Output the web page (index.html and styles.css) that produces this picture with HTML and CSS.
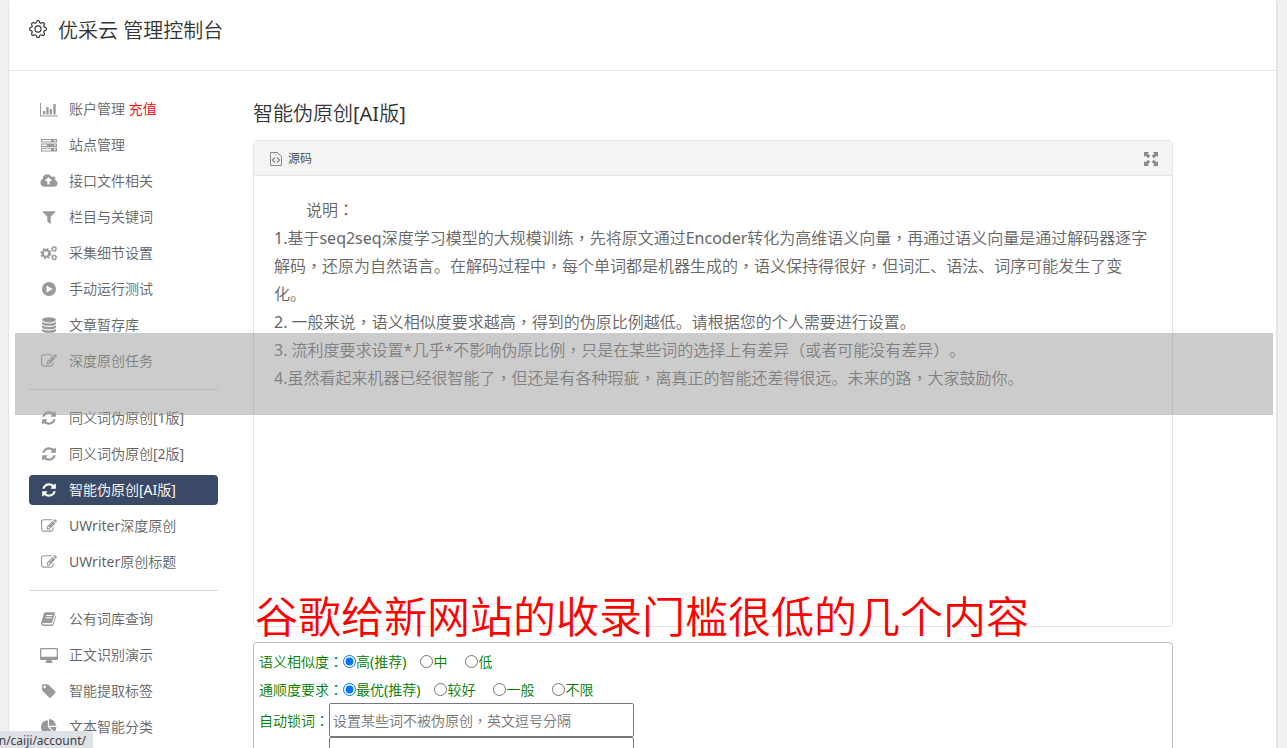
FILE: index.html
```html
<!DOCTYPE html>
<html lang="zh">
<head>
    <meta charset="UTF-8">
    <meta name="viewport" content="width=device-width, initial-scale=1.0">
    <title>优采云 管理控制台</title>
    <link rel="stylesheet" href="styles.css">
</head>
<body>

<!-- 图标 -->
<svg class="sprite" aria-hidden="true">
    <symbol id="i-gear" viewBox="0 0 16 16">
        <path d="M8 4.754a3.246 3.246 0 1 0 0 6.492 3.246 3.246 0 0 0 0-6.492zM5.754 8a2.246 2.246 0 1 1 4.492 0 2.246 2.246 0 0 1-4.492 0z"/>
        <path d="M9.796 1.343c-.527-1.79-3.065-1.79-3.592 0l-.094.319a.873.873 0 0 1-1.255.52l-.292-.16c-1.64-.892-3.433.902-2.54 2.541l.159.292a.873.873 0 0 1-.52 1.255l-.319.094c-1.79.527-1.79 3.065 0 3.592l.319.094a.873.873 0 0 1 .52 1.255l-.16.292c-.892 1.64.901 3.434 2.541 2.54l.292-.159a.873.873 0 0 1 1.255.52l.094.319c.527 1.79 3.065 1.79 3.592 0l.094-.319a.873.873 0 0 1 1.255-.52l.292.16c1.64.893 3.434-.902 2.54-2.541l-.159-.292a.873.873 0 0 1 .52-1.255l.319-.094c1.79-.527 1.79-3.065 0-3.592l-.319-.094a.873.873 0 0 1-.52-1.255l.16-.292c.893-1.64-.902-3.433-2.541-2.54l-.292.159a.873.873 0 0 1-1.255-.52l-.094-.319zm-2.633.283c.246-.835 1.428-.835 1.674 0l.094.319a1.873 1.873 0 0 0 2.693 1.115l.291-.16c.764-.415 1.6.42 1.184 1.185l-.159.292a1.873 1.873 0 0 0 1.116 2.692l.318.094c.835.246.835 1.428 0 1.674l-.319.094a1.873 1.873 0 0 0-1.115 2.693l.16.291c.415.764-.42 1.6-1.185 1.184l-.291-.159a1.873 1.873 0 0 0-2.693 1.116l-.094.318c-.246.835-1.428.835-1.674 0l-.094-.319a1.873 1.873 0 0 0-2.692-1.115l-.292.16c-.764.415-1.6-.42-1.184-1.185l.159-.291A1.873 1.873 0 0 0 1.945 8.93l-.319-.094c-.835-.246-.835-1.428 0-1.674l.319-.094A1.873 1.873 0 0 0 3.06 4.377l-.16-.292c-.415-.764.42-1.6 1.185-1.184l.292.159a1.873 1.873 0 0 0 2.692-1.115l.094-.319z"/>
    </symbol>
    <symbol id="i-chart" viewBox="0 0 20 16">
        <path d="M1 2h1v12.5h17v1H1zM4 10h2.3v3.5H4zM7.3 6h2.3v7.5H7.3zM10.7 8H13v5.5h-2.3zM14.3 3h2.4v10.5h-2.4z"/>
    </symbol>
    <symbol id="i-server" viewBox="0 0 20 16">
        <path fill-rule="evenodd" d="M2 2h16v3.6H2zM3 3v1.6h9V3zM15 3v1.4h1.6V3zM2 6.4h16V10H2zM3 7.4V9h5V7.4zM15 7.4v1.4h1.6V7.4zM2 10.8h16v3.6H2zM3 11.8v1.6h9v-1.6zM15 11.8v1.4h1.6v-1.4z"/>
    </symbol>
    <symbol id="i-cloud" viewBox="0 0 1920 1792">
        <path fill-rule="evenodd" d="M1280 864q0-14-9-23l-352-352q-9-9-23-9t-23 9l-351 351q-10 12-10 24 0 14 9 23t23 9h224v352q0 13 9.500 22.500t22.500 9.500h192q13 0 22.500-9.500t9.500-22.500v-352h224q13 0 22.500-9.500t9.500-22.500zm640 288q0 159-112.500 271.500t-271.500 112.500h-1088q-185 0-316.500-131.500t-131.500-316.500q0-130 70-240t188-165q-2-30-2-43 0-212 150-362t362-150q156 0 285.500 87t188.500 231q71-62 166-62 106 0 181 75t75 181q0 76-41 138 130 31 213.500 135.500t83.500 238.500z"/>
    </symbol>
    <symbol id="i-filter" viewBox="0 0 1792 1792">
        <path d="M1595 295q17 41-14 70l-493 493v742q0 42-39 59-13 5-25 5-27 0-45-19l-256-256q-19-19-19-45v-486l-493-493q-31-29-14-70 17-39 59-39h1280q42 0 59 39z"/>
    </symbol>
    <symbol id="i-cogs" viewBox="0 0 20 16">
        <g fill="none" stroke="currentColor">
            <circle cx="7" cy="8.500" r="3.300" stroke-width="2.200"/>
            <circle cx="7" cy="8.500" r="4.900" stroke-width="1.500" stroke-dasharray="1.920 1.928"/>
            <circle cx="15.200" cy="4" r="1.800" stroke-width="1.300"/>
            <circle cx="15.200" cy="4" r="2.700" stroke-width="1" stroke-dasharray="1.060 1.060"/>
            <circle cx="15.200" cy="12.500" r="1.800" stroke-width="1.300"/>
            <circle cx="15.200" cy="12.500" r="2.700" stroke-width="1" stroke-dasharray="1.060 1.060"/>
        </g>
    </symbol>
    <symbol id="i-play" viewBox="0 0 20 16">
        <path fill-rule="evenodd" d="M10 1a7 7 0 1 1 0 14a7 7 0 1 1 0-14zM7.500 4.400v7.200L13.800 8z"/>
    </symbol>
    <symbol id="i-database" viewBox="0 0 20 16">
        <ellipse cx="10" cy="2.800" rx="7" ry="2.600"/>
        <path d="M3 4.700q2 1.700 7 1.700t7-1.700v1.700q0 2.400-7 2.400t-7-2.400zM3 8.200q2 1.700 7 1.700t7-1.700v1.700q0 2.400-7 2.400t-7-2.400zM3 11.700q2 1.700 7 1.700t7-1.700v1.700q0 2.400-7 2.400t-7-2.400z"/>
    </symbol>
    <symbol id="i-edit" viewBox="0 0 1792 1792">
        <path d="M888 1184l116-116-152-152-116 116v56h96v96h56zm440-720q-16-16-33 1l-350 350q-17 17-1 33t33-1l350-350q17-17 1-33zm80 594v190q0 119-84.500 203.500t-203.500 84.500h-832q-119 0-203.500-84.500t-84.500-203.500v-832q0-119 84.500-203.500t203.500-84.500h832q63 0 117 25 15 7 18 23 3 17-9 29l-49 49q-14 14-32 8-23-6-45-6h-832q-66 0-113 47t-47 113v832q0 66 47 113t113 47h832q66 0 113-47t47-113v-126q0-13 9-22l64-64q15-15 35-7t20 29zm-96-738l288 288-672 672h-288v-288zm444 132l-92 92-288-288 92-92q28-28 68-28t68 28l152 152q28 28 28 68t-28 68z"/>
    </symbol>
    <symbol id="i-refresh" viewBox="-128 -128 1792 1792">
        <path d="M1511 928q0 5-1 7-64 268-268 434.500t-478 166.500q-146 0-282.500-55t-243.500-157l-129 129q-19 19-45 19t-45-19-19-45v-448q0-26 19-45t45-19h448q26 0 45 19t19 45-19 45l-137 137q71 66 161 102t187 36q134 0 250-65t186-179q11-17 53-117 8-23 30-23h192q13 0 22.500 9.500t9.500 22.500zm25-800v448q0 26-19 45t-45 19h-448q-26 0-45-19t-19-45 19-45l138-138q-148-137-349-137-134 0-250 65t-186 179q-11 17-53 117-8 23-30 23h-199q-13 0-22.500-9.500t-9.500-22.500v-7q65-268 270-434.500t480-166.500q146 0 284 55.500t245 156.500l130-129q19-19 45-19t45 19 19 45z"/>
    </symbol>
    <symbol id="i-book" viewBox="0 0 20 16">
        <path fill-rule="evenodd" d="M6.500 1.200h8.500q1.200 0 .9 1.200L13.200 11q-.3.900-1.300.900H4.300q-1 0-.8.900.2.700 1 .7h8.200q.8 0 1.100-.8L16.700 4q.8.500.5 1.500l-2.600 8q-.4 1.400-1.800 1.400H4.400q-1.800 0-2.300-1.700-.2-.8.200-1.500L4.800 2.500q.4-1.300 1.700-1.300zM7.500 4.100l-.3 1h6.100l.3-1zM6.800 6.300l-.3 1h6.100l.3-1z"/>
    </symbol>
    <symbol id="i-desktop" viewBox="0 0 20 16">
        <path fill-rule="evenodd" d="M2.300 1h15.400q1.300 0 1.300 1.300v9.400q0 1.300-1.300 1.300h-5.200v1.500h1V16h-7v-1.500h1V13H2.300Q1 13 1 11.700V2.300Q1 1 2.300 1zm0 1.200v7.600h15.400V2.200z"/>
    </symbol>
    <symbol id="i-tag" viewBox="0 0 20 16">
        <path fill-rule="evenodd" d="M3 2.500Q3 1.300 4.200 1.300H8q1 0 1.700.7l6.500 6.300q.9.900 0 1.700l-4.400 4.400q-.8.800-1.700 0L3.700 8Q3 7.300 3 6.300zm2.600.1a1.300 1.300 0 1 0 0 2.600a1.300 1.300 0 1 0 0-2.600z"/>
    </symbol>
    <symbol id="i-pie" viewBox="0 0 1792 1792">
        <path d="M768 890l546 546q-106 108-247.500 168t-298.500 60q-209 0-385.500-103t-279.500-279.500-103-385.500 103-385.500 279.500-279.500 385.500-103v762zm187 6h773q0 157-60 298.500t-168 247.500zm709-128h-768v-768q209 0 385.500 103t279.500 279.500 103 385.500z"/>
    </symbol>
    <symbol id="i-source" viewBox="0 0 12 14">
        <path fill="none" stroke="currentColor" d="M.5.500h7l4 4v9H.500z"/>
        <path fill="none" stroke="currentColor" stroke-width="1.300" d="M5 5.500L2.500 8 5 10.500M7 5.500L9.500 8 7 10.500"/>
    </symbol>
    <symbol id="i-expand" viewBox="0 0 14 14">
        <path d="M0 0h5L3.600 1.500l2.600 2.600L4.100 6.200 1.500 3.600 0 5zM14 0v5l-1.500-1.400-2.600 2.600-2.100-2.100 2.600-2.600L9 0zM0 14V9l1.500 1.400 2.600-2.600 2.100 2.100-2.600 2.600L5 14zM14 14H9l1.400-1.500-2.600-2.600 2.100-2.100 2.600 2.600L14 9z"/>
    </symbol>
</svg>

<div class="console">
    <header class="console-header">
        <svg class="gear"><use href="#i-gear"/></svg>
        <h1>优采云 管理控制台</h1>
    </header>

    <div class="console-body">
        <nav class="sidebar">
            <ul>
                <li><a href="#"><svg><use href="#i-chart"/></svg><span>账户管理 <em>充值</em></span></a></li>
                <li><a href="#"><svg><use href="#i-server"/></svg><span>站点管理</span></a></li>
                <li><a href="#"><svg><use href="#i-cloud"/></svg><span>接口文件相关</span></a></li>
                <li><a href="#"><svg><use href="#i-filter"/></svg><span>栏目与关键词</span></a></li>
                <li><a href="#"><svg><use href="#i-cogs"/></svg><span>采集细节设置</span></a></li>
                <li><a href="#"><svg><use href="#i-play"/></svg><span>手动运行测试</span></a></li>
                <li><a href="#"><svg><use href="#i-database"/></svg><span>文章暂存库</span></a></li>
                <li><a href="#"><svg><use href="#i-edit"/></svg><span>深度原创任务</span></a></li>
            </ul>
            <ul>
                <li><a href="#"><svg><use href="#i-refresh"/></svg><span>同义词伪原创[1版]</span></a></li>
                <li><a href="#"><svg><use href="#i-refresh"/></svg><span>同义词伪原创[2版]</span></a></li>
                <li><a href="#" class="active"><svg><use href="#i-refresh"/></svg><span>智能伪原创[AI版]</span></a></li>
                <li><a href="#"><svg><use href="#i-edit"/></svg><span>UWriter深度原创</span></a></li>
                <li><a href="#"><svg><use href="#i-edit"/></svg><span>UWriter原创标题</span></a></li>
            </ul>
            <ul>
                <li><a href="#"><svg><use href="#i-book"/></svg><span>公有词库查询</span></a></li>
                <li><a href="#"><svg><use href="#i-desktop"/></svg><span>正文识别演示</span></a></li>
                <li><a href="#"><svg><use href="#i-tag"/></svg><span>智能提取标签</span></a></li>
                <li><a href="#"><svg><use href="#i-pie"/></svg><span>文本智能分类</span></a></li>
            </ul>
        </nav>

        <main class="content">
            <h2>智能伪原创[AI版]</h2>

            <section class="editor">
                <div class="toolbar">
                    <button type="button" class="source-btn"><svg><use href="#i-source"/></svg><span>源码</span></button>
                    <button type="button" class="expand-btn" aria-label="全屏"><svg><use href="#i-expand"/></svg></button>
                </div>
                <div class="editor-text">
                    <p class="indent">说明<span class="mid" lang="zh-TW">：</span></p>
                    <p>1.基于seq2seq深度学习模型的大规模训练<span class="mid" lang="zh-TW">，</span>先将原文通过Encoder转化为高维语义向量<span class="mid" lang="zh-TW">，</span>再通过语义向量是通过解码器逐字解码<span class="mid" lang="zh-TW">，</span>还原为自然语言。在解码过程中<span class="mid" lang="zh-TW">，</span>每个单词都是机器生成的<span class="mid" lang="zh-TW">，</span>语义保持得很好<span class="mid" lang="zh-TW">，</span>但词汇、语法、词序可能发生了变化。</p>
                    <p>2. 一般来说<span class="mid" lang="zh-TW">，</span>语义相似度要求越高<span class="mid" lang="zh-TW">，</span>得到的伪原比例越低。请根据您的个人需要进行设置。</p>
                    <p>3. 流利度要求设置*几乎*不影响伪原比例<span class="mid" lang="zh-TW">，</span>只是在某些词的选择上有差异（或者可能没有差异）。</p>
                    <p>4.虽然看起来机器已经很智能了<span class="mid" lang="zh-TW">，</span>但还是有各种瑕疵<span class="mid" lang="zh-TW">，</span>离真正的智能还差得很远。未来的路<span class="mid" lang="zh-TW">，</span>大家鼓励你。</p>
                </div>
            </section>

            <form class="options">
                <div class="row" role="radiogroup" aria-label="语义相似度">
                    <span>语义相似度<span class="mid" lang="zh-TW">：</span></span>
                    <label class="first"><input type="radio" name="similar" checked>高(推荐)</label>
                    <label><input type="radio" name="similar">中</label>
                    <label><input type="radio" name="similar">低</label>
                </div>
                <div class="row" role="radiogroup" aria-label="通顺度要求">
                    <span>通顺度要求<span class="mid" lang="zh-TW">：</span></span>
                    <label class="first"><input type="radio" name="fluency" checked>最优(推荐)</label>
                    <label><input type="radio" name="fluency">较好</label>
                    <label><input type="radio" name="fluency">一般</label>
                    <label><input type="radio" name="fluency">不限</label>
                </div>
                <div class="row fields">
                    <label for="lock-words">自动锁词<span class="mid" lang="zh-TW">：</span></label>
                    <div class="inputs">
                        <input type="text" id="lock-words" lang="zh-TW" placeholder="设置某些词不被伪原创，英文逗号分隔">
                        <input type="text" aria-label="锁词">
                    </div>
                </div>
            </form>
        </main>
    </div>
</div>

<div class="mask"></div>
<p class="headline">谷歌给新网站的收录门槛很低的几个内容</p>
<div class="status"><span>n/caiji/account/</span></div>

</body>
</html>
```

FILE: styles.css
```css
* {
    box-sizing: border-box;
}
body {
    position: relative;
    margin: 0;
    height: 100vh;
    overflow: hidden;
    background-color: #f1f1f1;
    color: #666;
    font-family: "Noto Sans", "Noto Sans CJK SC DemiLight", "Noto Sans CJK SC", sans-serif;
    font-size: 14px;
    text-spacing-trim: space-all;
}
h1, h2, p, ul {
    margin: 0;
    padding: 0;
    font-weight: 400;
}
button, input {
    font: inherit;
}
svg {
    fill: currentColor;
}
.sprite {
    display: none;
}
.mid {
    font-family: "Noto Sans CJK TC", sans-serif;
    line-height: 1;
}
.console {
    height: 100%;
    margin: 0 9px 0 8px;
    overflow: hidden;
    background-color: #fff;
    border-left: 1px solid #e4e4e4;
    border-right: 2px solid #e4e4e4;
    border-top-left-radius: 4px;
    border-top-right-radius: 4px;
}

/* 顶部 */
.console-header {
    display: flex;
    align-items: flex-start;
    gap: 11px;
    height: 71px;
    padding: 16px 20px;
    border-bottom: 1px solid #e4e4e4;
    color: #333;
}
.console-header .gear {
    width: 18px;
    height: 18px;
    margin-top: 4px;
}
h1, h2 {
    color: #333;
    font-size: 20px;
    line-height: 30px;
}

.console-body {
    display: flex;
    gap: 35px;
    padding: 23px 103px 0 20px;
}

/* 左侧菜单 */
.sidebar {
    flex: 0 0 189px;
}
.sidebar ul {
    display: flex;
    flex-direction: column;
    gap: 6px;
    list-style: none;
}
.sidebar ul + ul {
    margin-top: 13px;
    padding-top: 13px;
    border-top: 1px solid #d8d8d8;
}
.sidebar a {
    display: flex;
    align-items: center;
    gap: 10px;
    height: 30px;
    padding: 0 10px;
    border-radius: 4px;
    color: #666;
    text-decoration: none;
}
.sidebar span {
    padding-bottom: 2px;
}
.sidebar svg {
    width: 20px;
    height: 16px;
    color: #999;
}
.sidebar em {
    color: #f00;
    font-style: normal;
}
.sidebar .active {
    background-color: #3a4a66;
    color: #fff;
}
.sidebar .active svg {
    color: #fff;
}

/* 右侧内容 */
.content {
    flex: 1;
    min-width: 0;
    padding-top: 5px;
}
.editor {
    min-height: 487px;
    margin-top: 11px;
    border: 1px solid #e4e4e4;
    border-radius: 4px;
}
.toolbar {
    display: flex;
    align-items: center;
    justify-content: space-between;
    height: 35px;
    padding: 2px 14px 0 16px;
    background-color: #f4f4f4;
    border-bottom: 1px solid #e4e4e4;
}
.toolbar button {
    display: flex;
    align-items: center;
    gap: 6px;
    padding: 0;
    border: none;
    background: none;
    color: #444;
    font-size: 12px;
    cursor: pointer;
}
.toolbar span {
    padding-bottom: 2px;
}
.toolbar svg {
    width: 12px;
    height: 14px;
    color: #888;
}
.toolbar .expand-btn svg {
    width: 14px;
}
.editor-text {
    padding: 20px;
    font-size: 16px;
    line-height: 28px;
}
.editor-text .indent {
    text-indent: 2em;
}

.options {
    margin-top: 15px;
    padding: 4px 5px;
    border: 1px solid #bbb;
    border-radius: 4px;
    color: #008000;
}
.row {
    display: flex;
    align-items: center;
    height: 28px;
}
.row label {
    display: flex;
    align-items: center;
    margin-right: 18px;
}
.row .first {
    margin-right: 14px;
}
.row input[type="radio"] {
    width: 13px;
    height: 13px;
    margin: 0;
}
.fields {
    align-items: flex-start;
    height: auto;
}
.fields label {
    height: 34px;
    margin: 0;
}
.inputs {
    display: flex;
    flex-direction: column;
    width: 305px;
}
.inputs input {
    height: 34px;
    padding: 0 3px;
    border: 1px solid #767676;
    border-radius: 2px;
}
.inputs input::placeholder {
    color: #757575;
    font-family: "Noto Sans", "Noto Sans CJK TC DemiLight", "Noto Sans CJK TC", sans-serif;
}

/* 浮层 */
.mask {
    position: absolute;
    top: 333px;
    left: 15px;
    right: 14px;
    height: 82px;
    background-color: rgba(153, 153, 153, 0.5);
}
.headline {
    position: absolute;
    top: 585px;
    left: 255px;
    color: #f00;
    font-size: 43px;
    line-height: 64px;
    white-space: nowrap;
}
.status {
    position: absolute;
    bottom: 0;
    left: 0;
    display: flex;
    justify-content: flex-end;
    width: 93px;
    height: 17px;
    padding-right: 7px;
    overflow: hidden;
    background-color: #dee1e6;
    border-top-right-radius: 4px;
    color: #3c4043;
    font-size: 12px;
    line-height: 20px;
}
```
